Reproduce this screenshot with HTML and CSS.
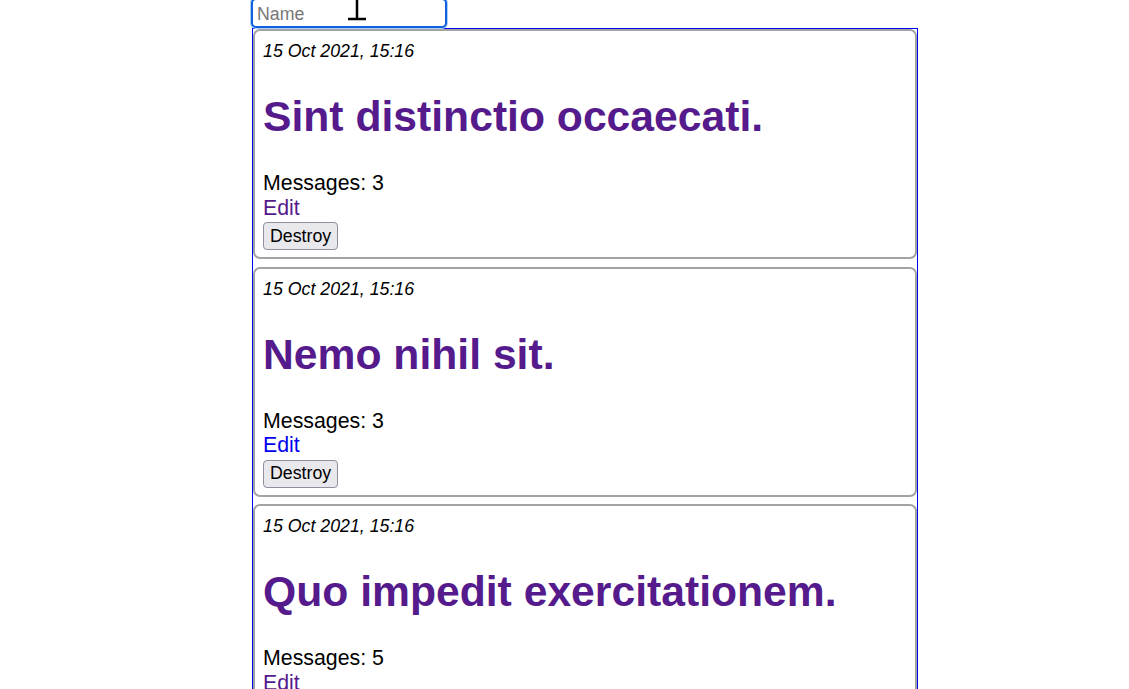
FILE: index.html
```html
<!DOCTYPE html>
<html>
<head>
<meta charset="utf-8">
<link rel="stylesheet" href="styles.css">
</head>
<body>
<div class="page">
  <form class="search">
    <input class="name-input" type="text" placeholder="Name">
  </form>
  <div class="list">
    <div class="card">
      <div class="date"><em>15 Oct 2021, 15:16</em></div>
      <h1 class="title"><a class="visited" href="#">Sint distinctio occaecati.</a></h1>
      <div class="count">Messages: 3</div>
      <a class="edit visited" href="#">Edit</a>
      <form class="destroy"><button type="button" class="btn">Destroy</button></form>
    </div>
    <div class="card">
      <div class="date"><em>15 Oct 2021, 15:16</em></div>
      <h1 class="title"><a class="visited" href="#">Nemo nihil sit.</a></h1>
      <div class="count">Messages: 3</div>
      <a class="edit" href="#">Edit</a>
      <form class="destroy"><button type="button" class="btn">Destroy</button></form>
    </div>
    <div class="card">
      <div class="date"><em>15 Oct 2021, 15:16</em></div>
      <h1 class="title"><a class="visited" href="#">Quo impedit exercitationem.</a></h1>
      <div class="count">Messages: 5</div>
      <a class="edit visited" href="#">Edit</a>
      <form class="destroy"><button type="button" class="btn">Destroy</button></form>
    </div>
  </div>
  <svg class="ibeam" width="22" height="24" viewBox="0 0 22 24">
    <path d="M11 0 V19" stroke="#000" stroke-width="2.5" fill="none"/>
    <path d="M2 20 H20" stroke="#000" stroke-width="2.5" fill="none"/>
  </svg>
</div>
</body>
</html>
```

FILE: styles.css
```css
html, body {
  margin: 0;
  padding: 0;
  background: #fff;
}
body {
  font-family: "Liberation Sans", Arial, sans-serif;
  font-size: 21.33px;
  color: #000;
  overflow: hidden;
}
.page {
  position: relative;
  width: 666px;
  margin-left: 252px;
  margin-top: -2px;
}
.search {
  margin: 0;
  height: 30px;
  display: flex;
  align-items: flex-end;
}
.name-input {
  box-sizing: border-box;
  margin: 0 0 0 -1px;
  width: 196px;
  height: 30px;
  font-family: "Liberation Sans", Arial, sans-serif;
  font-size: 17.78px;
  padding: 3px 4px 0 4px;
  border: 2px solid #1060e0;
  border-radius: 5px;
  box-shadow: 0 0 0 1px #a8cff5;
  outline: none;
  color: #000;
  background: #fff;
}
.name-input::placeholder {
  color: #777;
}
.list {
  border: 1px solid #0000ee;
  border-bottom: none;
  display: flex;
  flex-direction: column;
  gap: 7.5px;
}
.card {
  border: 2px solid #a3a3a3;
  border-radius: 7px;
  padding: 8px;
  height: 210px;
}
.date {
  font-size: 17.78px;
  line-height: 24px;
}
.title {
  font-size: 42.67px;
  font-weight: bold;
  margin: 29px 0 31px 0;
  line-height: 49px;
}
a {
  color: #0000ee;
  text-decoration: none;
}
a.visited {
  color: #551a8b;
}
.count {
  line-height: 23.5px;
}
.edit {
  display: block;
  line-height: 24.5px;
}
.destroy {
  margin: 2px 0 0 0;
}
.btn {
  font-family: "Liberation Sans", Arial, sans-serif;
  font-size: 17.78px;
  height: 28px;
  padding: 0 6px;
  background: #e9e9ed;
  border: 1px solid #8f8f9d;
  border-radius: 4px;
  color: #000;
}
.ibeam {
  position: absolute;
  left: 94px;
  top: 1px;
}
```
